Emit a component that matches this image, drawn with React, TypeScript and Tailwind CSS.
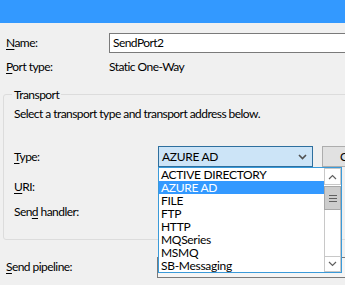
import React from "react";

const U = ({ children }: { children: React.ReactNode }) => (
  <span className="underline underline-offset-[2px] decoration-[1px]">{children}</span>
);

const Chevron = ({ up = false }: { up?: boolean }) => (
  <svg width="9" height="6" viewBox="0 0 9 6">
    <path
      d={up ? "M1 5 L4.5 1.5 L8 5" : "M1 1 L4.5 4.5 L8 1"}
      fill="none"
      stroke="#606060"
      strokeWidth="1.2"
    />
  </svg>
);

const items = [
  "ACTIVE DIRECTORY",
  "AZURE AD",
  "FILE",
  "FTP",
  "HTTP",
  "MQSeries",
  "MSMQ",
  "SB-Messaging",
];

export default function App() {
  return (
    <div className="relative w-[345px] h-[285px] overflow-hidden bg-[#f0f0f0] text-[12px] leading-none tracking-[-0.55px] text-black font-['Lato',sans-serif]">
      <div className="h-[23px] bg-[#3399ff]" />

      {/* Name */}
      <div className="mt-[10px] flex h-[20px] items-center">
        <div className="w-[109px] shrink-0 pl-[6px]">
          <U>N</U>ame:
        </div>
        <div className="flex h-[20px] w-[260px] shrink-0 items-center border border-[#7a7a7a] bg-white pl-[3px]">
          SendPort2
        </div>
      </div>

      {/* Port type */}
      <div className="mt-[4px] flex h-[20px] items-center">
        <div className="w-[109px] shrink-0 pl-[6px]">
          <U>P</U>ort type:
        </div>
        <div>Static One-Way</div>
      </div>

      {/* Transport group */}
      <div className="relative ml-[3px] mt-[17px] h-[146px] w-[380px] rounded-[3px] border border-[#dcdcdc]">
        <div className="absolute -top-[7px] left-[8px] bg-[#f0f0f0] px-[2px] leading-[13px]">Transport</div>
        <div className="mt-[11px] flex h-[16px] items-center pl-[10px]">
          Select a transport type and transport address below.
        </div>
        <div className="mt-[24px] flex h-[21px] items-center">
          <div className="w-[154px] shrink-0 pl-[10px]">
            <U>T</U>ype:
          </div>
          <div className="flex h-[21px] w-[155px] shrink-0 items-center justify-between border border-[#2e6f9e] bg-[#cce4f7] pl-[3px] pr-[5px] tracking-[-0.3px]">
            <span>AZURE AD</span>
            <svg width="9" height="6" viewBox="0 0 9 6">
              <path d="M1 1 L4.5 4.5 L8 1" fill="none" stroke="#505050" strokeWidth="1.6" />
            </svg>
          </div>
          <div className="ml-[9px] flex h-[21px] w-[60px] shrink-0 items-center border border-[#adadad] bg-[#e1e1e1] pl-[17px]">
            C
          </div>
        </div>
        <div className="mt-[12px] flex h-[16px] items-center pl-[10px]">
          <U>U</U>RI:
        </div>
        <div className="mt-[9px] flex h-[16px] items-center pl-[10px]">
          Sen<U>d</U>&nbsp;handler:
        </div>
      </div>

      {/* Send pipeline */}
      <div className="mt-[17px] flex h-[20px] items-center">
        <div className="w-[157px] shrink-0 pl-[6px]">
          <U>S</U>end pipeline:
        </div>
        <div className="h-[21px] w-[200px] shrink-0 border border-[#7a7a7a] bg-[#f5f5f5]" />
      </div>

      {/* Dropdown list overlay */}
      <div className="absolute left-[158px] top-[167px] flex h-[106px] w-[184px] border border-[#3a9ad9] bg-white tracking-[-0.3px]">
        <div className="flex w-[165px] flex-col">
          {items.map((it) => (
            <div
              key={it}
              className={
                "flex h-[13px] items-center pl-[2px] " +
                (it === "AZURE AD" ? "bg-[#3399ff] text-white" : "")
              }
            >
              {it}
            </div>
          ))}
        </div>
        <div className="flex w-[17px] flex-col bg-white">
          <div className="flex h-[17px] items-center justify-center border border-[#c8c8c8]">
            <Chevron up />
          </div>
          <div className="mt-[1px] flex h-[24px] flex-col items-center justify-center gap-[2px] border border-[#a8a8a8] bg-[#cdcdcd]">
            <div className="h-[1px] w-[8px] bg-[#606060]" />
            <div className="h-[1px] w-[8px] bg-[#606060]" />
            <div className="h-[1px] w-[8px] bg-[#606060]" />
          </div>
          <div className="flex-1 border-x border-[#c8c8c8]" />
          <div className="flex h-[16px] items-center justify-center border border-[#c8c8c8]">
            <Chevron />
          </div>
        </div>
      </div>
    </div>
  );
}
